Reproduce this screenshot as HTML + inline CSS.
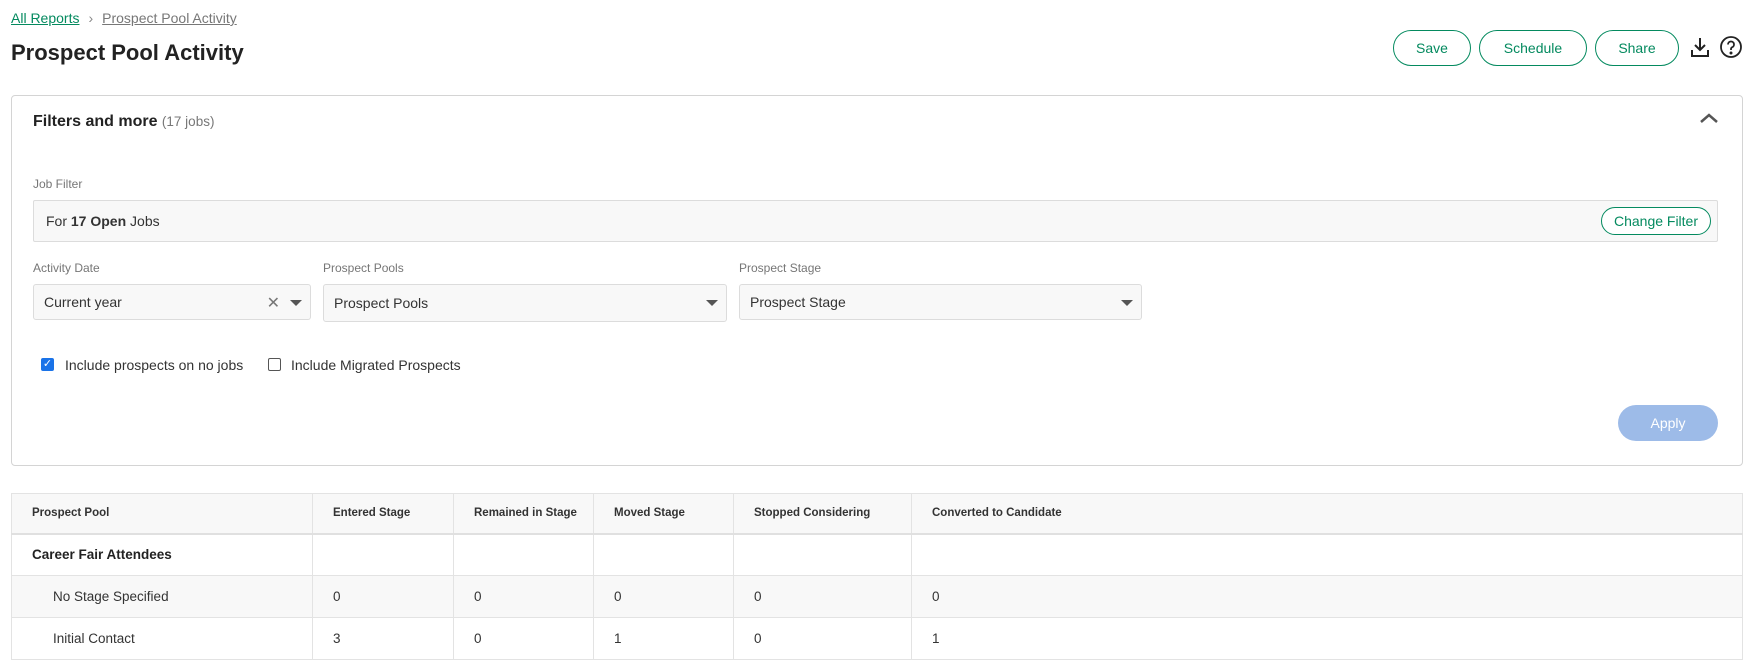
<!DOCTYPE html>
<html><head><meta charset="utf-8"><style>
*{box-sizing:border-box;margin:0;padding:0}
body{width:1755px;height:657px;overflow:hidden;background:#fff;font-family:"Liberation Sans",sans-serif;color:#222;position:relative}
.a{position:absolute}
.btn{position:absolute;border:1.5px solid #048a5f;border-radius:20px;color:#048a5f;font-size:14px;display:flex;align-items:center;justify-content:center;background:#fff}
.lbl{position:absolute;font-size:12px;color:#767676}
.sel{position:absolute;background:#f8f8f8;border:1px solid #dcdcdc;border-radius:3px;height:36px;font-size:14px;color:#333;padding-left:10px;display:flex;align-items:center}
.tri{position:absolute;right:8px;top:15px;width:0;height:0;border-left:6px solid transparent;border-right:6px solid transparent;border-top:6px solid #555}
table{position:absolute;left:11px;top:493px;width:1732px;border-collapse:collapse;font-size:13.5px;color:#333}
td{border:1px solid #e3e3e3;height:42px;padding-left:20px;vertical-align:middle}
tr.h td{height:40px;font-size:11.5px;font-weight:bold;color:#333;background:#f8f8f8;border-bottom:2px solid #e0e0e0}
tr.g td{background:#f8f8f8}
</style></head><body>
<div class="a" style="left:11px;top:10px;font-size:14px"><span style="color:#048a5f;text-decoration:underline">All Reports</span><span style="color:#888;margin:0 9px">&#x203A;</span><span style="color:#777;text-decoration:underline">Prospect Pool Activity</span></div>
<div class="a" style="left:11px;top:40px;font-size:22px;font-weight:bold;color:#222">Prospect Pool Activity</div>
<div class="btn" style="left:1393px;top:30px;width:78px;height:36px">Save</div>
<div class="btn" style="left:1479px;top:30px;width:108px;height:36px">Schedule</div>
<div class="btn" style="left:1595px;top:30px;width:84px;height:36px">Share</div>
<svg class="a" style="left:1690px;top:36px" width="20" height="22" viewBox="0 0 20 22" fill="none" stroke="#222" stroke-width="2"><path d="M10 2v12M5 9l5 5 5-5M2 14v6h16v-6"/></svg>
<svg class="a" style="left:1719px;top:35px" width="24" height="24" viewBox="0 0 24 24" fill="none" stroke="#222" stroke-width="1.8"><circle cx="12" cy="12" r="10"/><path d="M9 9.5a3 3 0 1 1 4 2.8c-.8.4-1 1-1 2v.7"/><circle cx="12" cy="18" r=".6" fill="#222"/></svg>
<div class="a" style="left:11px;top:95px;width:1732px;height:371px;border:1px solid #d4d4d4;border-radius:4px"></div>
<div class="a" style="left:33px;top:113px;font-size:16px;font-weight:bold;color:#222">Filters and more <span style="font-weight:normal;font-size:13.5px;color:#777">(17 jobs)</span></div>
<svg class="a" style="left:1699px;top:112px" width="20" height="12" viewBox="0 0 20 12" fill="none" stroke="#555" stroke-width="2.5"><path d="M2 10l8-7 8 7"/></svg>
<div class="lbl" style="left:33px;top:177px">Job Filter</div>
<div class="a" style="left:33px;top:200px;width:1685px;height:42px;background:#f8f8f8;border:1px solid #dcdcdc;border-radius:2px"></div>
<div class="a" style="left:46px;top:213px;font-size:14px;color:#333">For <b>17 Open</b> Jobs</div>
<div class="btn" style="left:1601px;top:207px;width:110px;height:28px;font-size:14px">Change Filter</div>
<div class="lbl" style="left:33px;top:261px">Activity Date</div>
<div class="lbl" style="left:323px;top:261px">Prospect Pools</div>
<div class="lbl" style="left:739px;top:261px">Prospect Stage</div>
<div class="sel" style="left:33px;top:284px;width:278px">Current year<span class="a" style="right:30px;top:8px;color:#777;font-size:16px">&#x2715;</span><div class="tri"></div></div>
<div class="sel" style="left:323px;top:284px;width:404px;height:38px">Prospect Pools<div class="tri"></div></div>
<div class="sel" style="left:739px;top:284px;width:403px">Prospect Stage<div class="tri"></div></div>
<div class="a" style="left:41px;top:358px;width:13px;height:13px;background:#1a73e8;border-radius:2px;color:#fff;font-size:11px;line-height:13px;text-align:center">&#x2713;</div>
<div class="a" style="left:65px;top:357px;font-size:14px;color:#333">Include prospects on no jobs</div>
<div class="a" style="left:268px;top:358px;width:13px;height:13px;border:1px solid #555;border-radius:2px"></div>
<div class="a" style="left:291px;top:357px;font-size:14px;color:#333">Include Migrated Prospects</div>
<div class="a" style="left:1618px;top:405px;width:100px;height:36px;border-radius:18px;background:#9dbbe8;color:#fff;font-size:14px;display:flex;align-items:center;justify-content:center">Apply</div>
<table>
<colgroup><col style="width:301px"><col style="width:141px"><col style="width:140px"><col style="width:140px"><col style="width:178px"><col></colgroup>
<tr class="h"><td>Prospect Pool</td><td>Entered Stage</td><td>Remained in Stage</td><td>Moved Stage</td><td>Stopped Considering</td><td>Converted to Candidate</td></tr>
<tr><td style="font-weight:bold;color:#222">Career Fair Attendees</td><td></td><td></td><td></td><td></td><td></td></tr>
<tr class="g"><td style="padding-left:41px">No Stage Specified</td><td>0</td><td>0</td><td>0</td><td>0</td><td>0</td></tr>
<tr><td style="padding-left:41px">Initial Contact</td><td>3</td><td>0</td><td>1</td><td>0</td><td>1</td></tr>
</table>
</body></html>
